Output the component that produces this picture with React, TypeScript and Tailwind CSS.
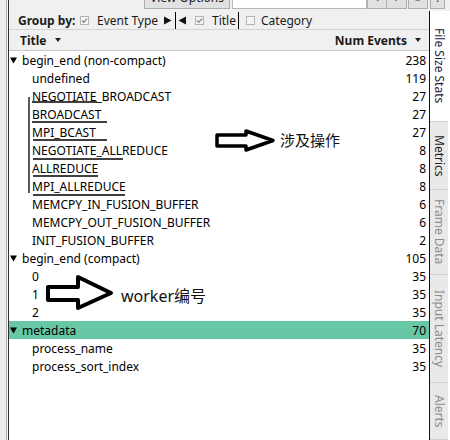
import React from "react";

type Row = { label: string; count: number; group?: boolean; selected?: boolean };

const rows: Row[] = [
  { label: "begin_end (non-compact)", count: 238, group: true },
  { label: "undefined", count: 119 },
  { label: "NEGOTIATE_BROADCAST", count: 27 },
  { label: "BROADCAST", count: 27 },
  { label: "MPI_BCAST", count: 27 },
  { label: "NEGOTIATE_ALLREDUCE", count: 8 },
  { label: "ALLREDUCE", count: 8 },
  { label: "MPI_ALLREDUCE", count: 8 },
  { label: "MEMCPY_IN_FUSION_BUFFER", count: 6 },
  { label: "MEMCPY_OUT_FUSION_BUFFER", count: 6 },
  { label: "INIT_FUSION_BUFFER", count: 2 },
  { label: "begin_end (compact)", count: 105, group: true },
  { label: "0", count: 35 },
  { label: "1", count: 35 },
  { label: "2", count: 35 },
  { label: "metadata", count: 70, group: true, selected: true },
  { label: "process_name", count: 35 },
  { label: "process_sort_index", count: 35 },
];

const tabs = [
  { label: "File Size Stats", h: "h-[111px]", active: true },
  { label: "Metrics", h: "h-[68px]", dark: true },
  { label: "Frame Data", h: "h-[85px]" },
  { label: "Input Latency", h: "h-[108px]" },
  { label: "Alerts", h: "h-[57px]" },
];

function Check({ on }: { on?: boolean }) {
  return (
    <svg width="9" height="9" viewBox="0 0 9 9" className="shrink-0">
      <rect x="0.5" y="0.5" width="8" height="8" fill="#f4f4f4" stroke="#b4b4b4" />
      {on && <path d="M2 4.5 L3.8 6.3 L7 2.6" fill="none" stroke="#8a8a8a" strokeWidth="1.3" />}
    </svg>
  );
}

function Caret() {
  return (
    <svg width="6" height="5" viewBox="0 0 6 5" className="shrink-0">
      <path d="M0 0 H6 L3 4 Z" fill="#222" />
    </svg>
  );
}

export default function App() {
  return (
    <div className="relative flex h-[440px] w-[450px] overflow-hidden bg-white font-['Noto_Sans',sans-serif] text-[12px] text-black">
      {/* left gutter */}
      <div className="flex h-full w-[9px] shrink-0">
        <div className="w-[6px] bg-[#ececec]" />
        <div className="w-px bg-[#a8a8a8]" />
        <div className="w-px bg-[#f8f8f8]" />
        <div className="w-px bg-[#303030]" />
      </div>

      <div className="flex flex-1 flex-col">
        {/* top toolbar, scrolled mostly out of view */}
        <div className="flex h-[11px] shrink-0 items-end overflow-hidden bg-[#f0f0f0] pb-[2px]">
          <div className="ml-[135px] flex h-[22px] w-[86px] items-center justify-center border border-[#adadad] bg-[#e1e1e1] text-[12px] text-[#222]">
            View Options
          </div>
          <div className="ml-[2px] h-[22px] w-[135px] border border-[#b8b8b8] bg-white" />
          <div className="flex h-[22px] w-[20px] items-center justify-center border border-[#adadad] bg-[#e1e1e1] text-[#444]">‹</div>
          <div className="flex h-[22px] w-[20px] items-center justify-center border border-l-0 border-[#adadad] bg-[#e1e1e1] text-[#444]">›</div>
          <div className="ml-px flex h-[22px] w-[20px] items-center justify-center border border-[#adadad] bg-[#e1e1e1] text-[#444]">»</div>
          <div className="ml-[2px] flex h-[22px] w-[15px] items-center justify-center border border-[#adadad] bg-[#e1e1e1] text-[#444]">!</div>
        </div>

        <div className="flex flex-1">
          {/* table */}
          <div className="flex w-[420px] shrink-0 flex-col">
            <div className="flex h-[19px] items-center border-b border-[#d4d4d4] bg-[#f0f0f0] pl-[9px] pt-px text-[#1a1a1a]">
              <span className="w-[62px] font-bold">Group by:</span>
              <Check on />
              <span className="ml-[8px] w-[66px] whitespace-nowrap">Event Type</span>
              <svg width="9" height="9" viewBox="0 0 9 9" className="shrink-0">
                <path d="M1 0.5 L8.5 4.5 L1 8.5 Z" fill="#111" />
              </svg>
              <div className="ml-[3px] h-full w-px bg-black" />
              <svg width="9" height="9" viewBox="0 0 9 9" className="ml-[2px] shrink-0">
                <path d="M8 0.5 L0.5 4.5 L8 8.5 Z" fill="#111" />
              </svg>
              <span className="ml-[8px]">
                <Check on />
              </span>
              <span className="ml-[8px] w-[25px]">Title</span>
              <div className="ml-px h-full w-px bg-black" />
              <span className="ml-[7px]">
                <Check />
              </span>
              <span className="ml-[6px]">Category</span>
            </div>
            <div className="flex h-[21px] items-center border-b border-[#c8c8c8] bg-[#f0f0f0] pt-px font-bold text-[#1a1a1a]">
              <span className="ml-[11px]">Title</span>
              <span className="ml-[9px]">
                <Caret />
              </span>
              <span className="ml-auto">Num Events</span>
              <span className="ml-[8px] mr-[8px]">
                <Caret />
              </span>
            </div>
            <div className="flex flex-col">
              {rows.map((r, i) => (
                <div
                  key={i}
                  className={`flex h-[18px] items-center pt-px ${r.selected ? "bg-[#68c7a5]" : ""}`}
                >
                  {r.group ? (
                    <>
                      <svg width="7" height="7" viewBox="0 0 7 7" className="ml-px shrink-0">
                        <path d="M0 0.5 H7 L3.5 6.5 Z" fill="#000" />
                      </svg>
                      <span className="ml-[5px]">{r.label}</span>
                    </>
                  ) : (
                    <span className="ml-[23px]">{r.label}</span>
                  )}
                  <span className="ml-auto pr-[3px]">{r.count}</span>
                </div>
              ))}
            </div>
          </div>

          {/* right tabs */}
          <div className="flex w-[21px] shrink-0 flex-col border-l border-[#111]">
            {tabs.map((t) => (
              <div
                key={t.label}
                className={`flex ${t.h} w-[18px] items-center justify-center border-b border-[#d0d0d0] ${
                  t.active ? "bg-white text-[#1c1a3c]" : t.dark ? "bg-[#e9e9e9] text-[#222]" : "bg-[#e9e9e9] text-[#8c8c8c]"
                }`}
              >
                <span className="whitespace-nowrap [writing-mode:vertical-rl]">{t.label}</span>
              </div>
            ))}
          </div>
        </div>
      </div>

      {/* hand-drawn annotations over the list */}
      <svg className="pointer-events-none absolute left-0 top-0" width="450" height="440" viewBox="0 0 450 440">
        <g stroke="#000" strokeWidth="1.3" fill="none">
          <path d="M29 97 V193" />
          <path d="M32 102 H97" />
          <path d="M32 122 H107" />
          <path d="M33 140 H107" />
          <path d="M33 159 H123" />
          <path d="M33 176 H98" />
          <path d="M33 195 H125" />
        </g>
        <path
          d="M217 135 H246 V131 L273 140.5 L246 150 V146 H217 Z"
          fill="#fff"
          stroke="#000"
          strokeWidth="3.5"
          strokeLinejoin="round"
        />
        <path
          d="M48 287 H78 V277 L111 293 L78 308 V300 H48 Z"
          fill="#fff"
          stroke="#000"
          strokeWidth="4"
          strokeLinejoin="round"
        />
      </svg>
      <span className="pointer-events-none absolute left-[280px] top-[130px] font-['Noto_Sans_CJK_SC',sans-serif] text-[15px] leading-[20px] text-[#111]">
        涉及操作
      </span>
      <span className="pointer-events-none absolute left-[121px] top-[284px] font-['Noto_Sans','Noto_Sans_CJK_SC',sans-serif] text-[16px] leading-[24px] text-[#111]">
        worker编号
      </span>
    </div>
  );
}
